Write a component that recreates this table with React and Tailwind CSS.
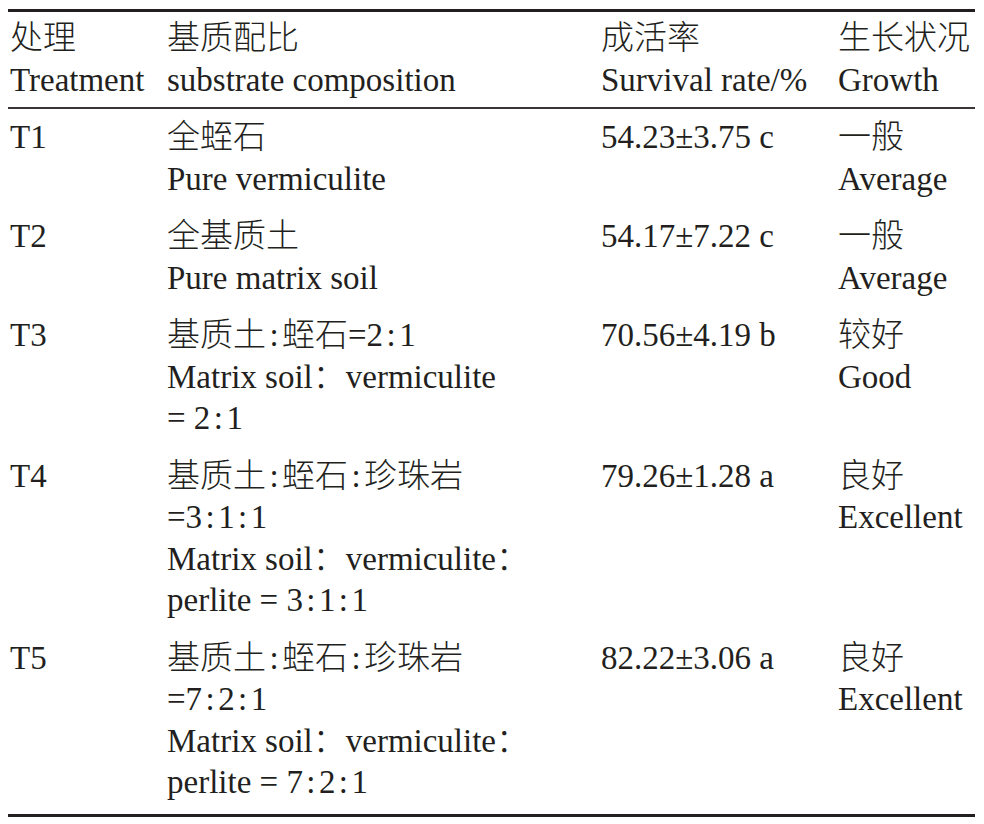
import React from "react";

const rows = [
  {
    id: "T1",
    comp: ["全蛭石", "Pure vermiculite"],
    rate: "54.23±3.75 c",
    growth: ["一般", "Average"],
  },
  {
    id: "T2",
    comp: ["全基质土", "Pure matrix soil"],
    rate: "54.17±7.22 c",
    growth: ["一般", "Average"],
  },
  {
    id: "T3",
    comp: ["基质土∶蛭石=2∶1", "Matrix soil：vermiculite", "= 2∶1"],
    rate: "70.56±4.19 b",
    growth: ["较好", "Good"],
  },
  {
    id: "T4",
    comp: [
      "基质土∶蛭石∶珍珠岩",
      "=3∶1∶1",
      "Matrix soil：vermiculite：",
      "perlite = 3∶1∶1",
    ],
    rate: "79.26±1.28 a",
    growth: ["良好", "Excellent"],
  },
  {
    id: "T5",
    comp: [
      "基质土∶蛭石∶珍珠岩",
      "=7∶2∶1",
      "Matrix soil：vermiculite：",
      "perlite = 7∶2∶1",
    ],
    rate: "82.22±3.06 a",
    growth: ["良好", "Excellent"],
  },
];

// ratio sign drawn narrow, like the print version
function withRatio(text) {
  const parts = text.split("∶");
  return parts.map((p, i) => (
    <React.Fragment key={i}>
      {i > 0 && <span className="inline-block w-[16px] text-center">:</span>}
      {p}
    </React.Fragment>
  ));
}

function Lines({ items }) {
  return (
    <div className="flex flex-col">
      {items.map((t, i) => (
        <span key={i} className="whitespace-nowrap">
          {withRatio(t)}
        </span>
      ))}
    </div>
  );
}

function App() {
  return (
    <div className="min-h-screen bg-white pt-[9px] pl-[8px] text-[#231f20] font-light font-['Liberation_Serif','Noto_Sans_CJK_SC',serif] text-[33px] leading-[41.5px]">
      <div className="w-[967px] border-t-[3px] border-b-[3px] border-[#231f20]">
        {/* header */}
        <div className="grid grid-cols-[159px_434px_237px_1fr] pt-[6px] pb-[6px] border-b-2 border-[#3a3637]">
          <div className="pl-[2px]">
            <Lines items={["处理", "Treatment"]} />
          </div>
          <Lines items={["基质配比", "substrate composition"]} />
          <Lines items={["成活率", "Survival rate/%"]} />
          <Lines items={["生长状况", "Growth"]} />
        </div>

        {/* body */}
        {rows.map((r, i) => (
          <div
            key={r.id}
            className={
              i === rows.length - 1
                ? "grid grid-cols-[159px_434px_237px_1fr] pt-2 pb-[10px]"
                : "grid grid-cols-[159px_434px_237px_1fr] py-2"
            }
          >
            <div className="pl-[2px]">{r.id}</div>
            <Lines items={r.comp} />
            <div className="whitespace-nowrap">{r.rate}</div>
            <Lines items={r.growth} />
          </div>
        ))}
      </div>
    </div>
  );
}

export default App;
